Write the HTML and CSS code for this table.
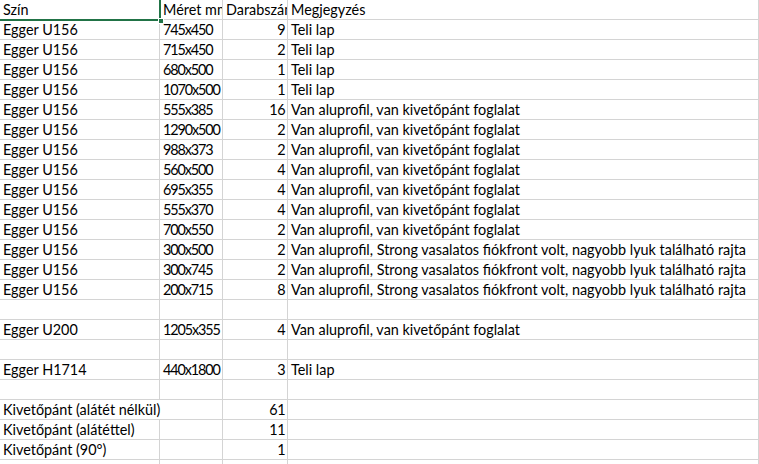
FILE: index.html
```html
<!DOCTYPE html>
<html lang="hu">
<head>
<meta charset="utf-8">
<title>Lapok</title>
<link rel="stylesheet" href="styles.css">
</head>
<body>
<div class="sheet">
  <div class="row">
    <div class="cell txt sel">Szín<span class="handle"></span></div>
    <div class="cell txt">Méret mm</div>
    <div class="cell txt">Darabszám</div>
    <div class="cell txt">Megjegyzés</div>
  </div>
  <div class="row"><div class="cell txt">Egger U156</div><div class="cell txt size">745x450</div><div class="cell num">9</div><div class="cell txt">Teli lap</div></div>
  <div class="row"><div class="cell txt">Egger U156</div><div class="cell txt size">715x450</div><div class="cell num">2</div><div class="cell txt">Teli lap</div></div>
  <div class="row"><div class="cell txt">Egger U156</div><div class="cell txt size">680x500</div><div class="cell num">1</div><div class="cell txt">Teli lap</div></div>
  <div class="row"><div class="cell txt">Egger U156</div><div class="cell txt size">1070x500</div><div class="cell num">1</div><div class="cell txt">Teli lap</div></div>
  <div class="row"><div class="cell txt">Egger U156</div><div class="cell txt size">555x385</div><div class="cell num">16</div><div class="cell txt">Van aluprofil, van kivetőpánt foglalat</div></div>
  <div class="row"><div class="cell txt">Egger U156</div><div class="cell txt size">1290x500</div><div class="cell num">2</div><div class="cell txt">Van aluprofil, van kivetőpánt foglalat</div></div>
  <div class="row"><div class="cell txt">Egger U156</div><div class="cell txt size">988x373</div><div class="cell num">2</div><div class="cell txt">Van aluprofil, van kivetőpánt foglalat</div></div>
  <div class="row"><div class="cell txt">Egger U156</div><div class="cell txt size">560x500</div><div class="cell num">4</div><div class="cell txt">Van aluprofil, van kivetőpánt foglalat</div></div>
  <div class="row"><div class="cell txt">Egger U156</div><div class="cell txt size">695x355</div><div class="cell num">4</div><div class="cell txt">Van aluprofil, van kivetőpánt foglalat</div></div>
  <div class="row"><div class="cell txt">Egger U156</div><div class="cell txt size">555x370</div><div class="cell num">4</div><div class="cell txt">Van aluprofil, van kivetőpánt foglalat</div></div>
  <div class="row"><div class="cell txt">Egger U156</div><div class="cell txt size">700x550</div><div class="cell num">2</div><div class="cell txt">Van aluprofil, van kivetőpánt foglalat</div></div>
  <div class="row"><div class="cell txt">Egger U156</div><div class="cell txt size">300x500</div><div class="cell num">2</div><div class="cell txt">Van aluprofil, Strong vasalatos fiókfront volt, nagyobb lyuk található rajta</div></div>
  <div class="row"><div class="cell txt">Egger U156</div><div class="cell txt size">300x745</div><div class="cell num">2</div><div class="cell txt">Van aluprofil, Strong vasalatos fiókfront volt, nagyobb lyuk található rajta</div></div>
  <div class="row"><div class="cell txt">Egger U156</div><div class="cell txt size">200x715</div><div class="cell num">8</div><div class="cell txt">Van aluprofil, Strong vasalatos fiókfront volt, nagyobb lyuk található rajta</div></div>
  <div class="row"><div class="cell"></div><div class="cell"></div><div class="cell"></div><div class="cell"></div></div>
  <div class="row"><div class="cell txt">Egger U200</div><div class="cell txt size">1205x355</div><div class="cell num">4</div><div class="cell txt">Van aluprofil, van kivetőpánt foglalat</div></div>
  <div class="row"><div class="cell"></div><div class="cell"></div><div class="cell"></div><div class="cell"></div></div>
  <div class="row"><div class="cell txt">Egger H1714</div><div class="cell txt size">440x1800</div><div class="cell num">3</div><div class="cell txt">Teli lap</div></div>
  <div class="row"><div class="cell"></div><div class="cell"></div><div class="cell"></div><div class="cell"></div></div>
  <div class="row"><div class="cell txt span2">Kivetőpánt (alátét nélkül)</div><div class="cell num">61</div><div class="cell"></div></div>
  <div class="row"><div class="cell txt">Kivetőpánt (alátéttel)</div><div class="cell"></div><div class="cell num">11</div><div class="cell"></div></div>
  <div class="row"><div class="cell txt">Kivetőpánt (90°)</div><div class="cell"></div><div class="cell num">1</div><div class="cell"></div></div>
  <div class="row"><div class="cell"></div><div class="cell"></div><div class="cell"></div><div class="cell"></div></div>
</div>
</body>
</html>
```

FILE: styles.css
```css
html, body {
  margin: 0;
  padding: 0;
  background: #ffffff;
  overflow: hidden;
}
.sheet {
  width: 759px;
  font-family: Lato, "Liberation Sans", sans-serif;
  font-size: 14.4px;
  color: #000;
}
.row {
  display: grid;
  grid-template-columns: 160px 63px 65px 471px;
  height: 20px;
}
.cell {
  box-sizing: border-box;
  height: 20px;
  border-right: 1px solid #d4d4d4;
  border-bottom: 1px solid #d4d4d4;
  white-space: nowrap;
  overflow: hidden;
  line-height: 20px;
  position: relative;
}
.txt {
  padding-left: 3px;
}
.size {
  letter-spacing: -1.1px;
}
.num {
  text-align: right;
  padding-right: 2px;
  letter-spacing: -0.5px;
}
.span2 {
  grid-column: span 2;
}
.sel {
  overflow: visible;
  border-right: 2px solid #217346;
  border-bottom: 2px solid #217346;
  height: 21px;
  width: 161px;
  margin-bottom: -1px;
  z-index: 2;
}
.handle {
  position: absolute;
  right: -5px;
  bottom: -5px;
  width: 6px;
  height: 6px;
  background: #217346;
  border: 1px solid #fff;
  box-sizing: border-box;
}
```
